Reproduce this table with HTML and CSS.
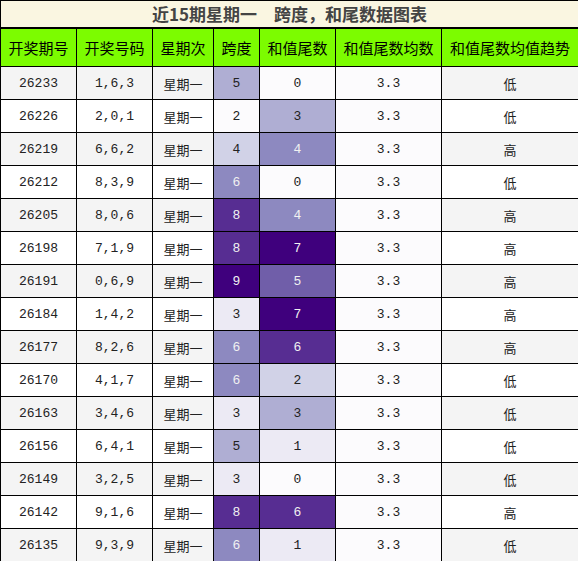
FILE: index.html
```html
<!DOCTYPE html>
<html lang="zh">
<head>
    <meta charset="UTF-8">
    <meta name="viewport" content="width=device-width, initial-scale=1.0">
    <title>近15期星期一 跨度，和尾数据图表</title>
    <link rel="stylesheet" href="styles.css">
</head>
<body>
    <table class="tabela">
        <colgroup>
            <col class="c1"><col class="c2"><col class="c3"><col class="c4"><col class="c5"><col class="c6"><col class="c7">
        </colgroup>
        <thead>
            <tr>
                <th class="titulo" colspan="7">近15期星期一　跨度，和尾数据图表</th>
            </tr>
            <tr class="cabecalho">
                <th>开奖期号</th>
                <th>开奖号码</th>
                <th>星期次</th>
                <th>跨度</th>
                <th>和值尾数</th>
                <th>和值尾数均数</th>
                <th>和值尾数均值趋势</th>
            </tr>
        </thead>
        <tbody>
            <tr><td>26233</td><td>1,6,3</td><td>星期一</td><td class="p3">5</td><td class="p0">0</td><td class="p0">3.3</td><td>低</td></tr>
            <tr><td>26226</td><td>2,0,1</td><td>星期一</td><td class="p0">2</td><td class="p3">3</td><td class="p0">3.3</td><td>低</td></tr>
            <tr><td>26219</td><td>6,6,2</td><td>星期一</td><td class="p2">4</td><td class="p4">4</td><td class="p0">3.3</td><td>高</td></tr>
            <tr><td>26212</td><td>8,3,9</td><td>星期一</td><td class="p4">6</td><td class="p0">0</td><td class="p0">3.3</td><td>低</td></tr>
            <tr><td>26205</td><td>8,0,6</td><td>星期一</td><td class="p6">8</td><td class="p4">4</td><td class="p0">3.3</td><td>高</td></tr>
            <tr><td>26198</td><td>7,1,9</td><td>星期一</td><td class="p6">8</td><td class="p7">7</td><td class="p0">3.3</td><td>高</td></tr>
            <tr><td>26191</td><td>0,6,9</td><td>星期一</td><td class="p7">9</td><td class="p5">5</td><td class="p0">3.3</td><td>高</td></tr>
            <tr><td>26184</td><td>1,4,2</td><td>星期一</td><td class="p1">3</td><td class="p7">7</td><td class="p0">3.3</td><td>高</td></tr>
            <tr><td>26177</td><td>8,2,6</td><td>星期一</td><td class="p4">6</td><td class="p6">6</td><td class="p0">3.3</td><td>高</td></tr>
            <tr><td>26170</td><td>4,1,7</td><td>星期一</td><td class="p4">6</td><td class="p2">2</td><td class="p0">3.3</td><td>低</td></tr>
            <tr><td>26163</td><td>3,4,6</td><td>星期一</td><td class="p1">3</td><td class="p3">3</td><td class="p0">3.3</td><td>低</td></tr>
            <tr><td>26156</td><td>6,4,1</td><td>星期一</td><td class="p3">5</td><td class="p1">1</td><td class="p0">3.3</td><td>低</td></tr>
            <tr><td>26149</td><td>3,2,5</td><td>星期一</td><td class="p1">3</td><td class="p0">0</td><td class="p0">3.3</td><td>低</td></tr>
            <tr><td>26142</td><td>9,1,6</td><td>星期一</td><td class="p6">8</td><td class="p6">6</td><td class="p0">3.3</td><td>高</td></tr>
            <tr><td>26135</td><td>9,3,9</td><td>星期一</td><td class="p4">6</td><td class="p1">1</td><td class="p0">3.3</td><td>低</td></tr>
        </tbody>
    </table>
</body>
</html>
```

FILE: styles.css
```css
* {
    margin: 0;
    padding: 0;
    box-sizing: border-box;
}

body {
    background: white;
    font-family: "Liberation Mono", "Noto Sans CJK SC", monospace;
    color: #222;
}

.tabela {
    width: 578px;
    border-collapse: collapse;
    table-layout: fixed;
}

.c1 { width: 76px; }
.c2 { width: 76px; }
.c3 { width: 61px; }
.c4 { width: 46px; }
.c5 { width: 76px; }
.c6 { width: 106px; }
.c7 { width: 137px; }

.tabela th,
.tabela td {
    border: 1px solid #000;
    text-align: center;
    white-space: nowrap;
}

.titulo {
    height: 27px;
    background: #faf6e1;
    border-bottom: 2px solid #000 !important;
    font-family: "Noto Sans CJK SC", sans-serif;
    font-size: 17px;
    font-weight: bold;
    color: #444;
    line-height: 24px;
}

.cabecalho th {
    height: 39px;
    background: #7cfc00;
    font-family: "Noto Sans CJK SC", sans-serif;
    font-size: 15px;
    font-weight: normal;
    color: #000;
}

.tabela td {
    height: 33px;
    font-size: 13px;
    padding-top: 1px;
}

.tabela tbody tr:nth-child(odd) {
    background: #f4f4f4;
}

.tabela tbody tr:nth-child(even) {
    background: #fff;
}

/* escala roxa */
.p0 { background: #fcfbfd; }
.p1 { background: #eceaf4; }
.p2 { background: #d1d2e7; }
.p3 { background: #afaed3; }
.p4 { background: #8d89c0; color: #f1f1f1; }
.p5 { background: #705ea9; color: #f1f1f1; }
.p6 { background: #572d92; color: #f1f1f1; }
.p7 { background: #3f007d; color: #f1f1f1; }
```
